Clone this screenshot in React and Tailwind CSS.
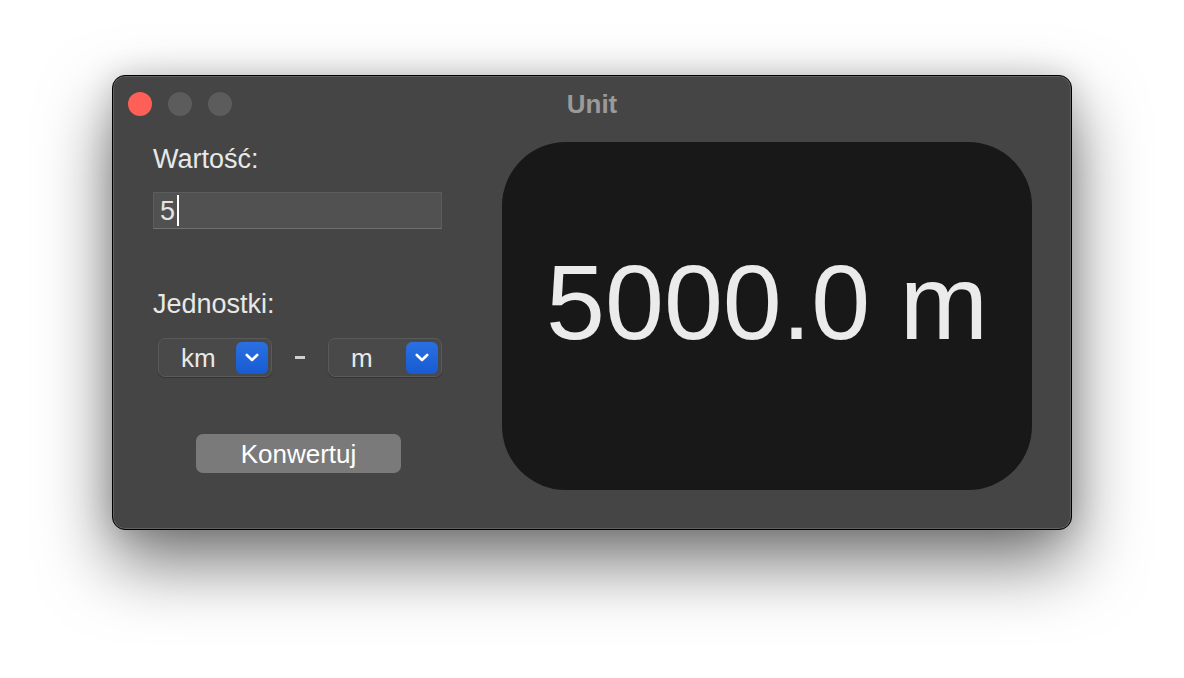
import React from "react";

const ChevronDown = () => (
  <svg width="14" height="9" viewBox="0 0 14 9" fill="none">
    <path d="M1.8 2l5.2 5 5.2-5" stroke="white" strokeWidth="2.6" strokeLinecap="round" strokeLinejoin="round" />
  </svg>
);

const UnitSelect = ({ value }) => (
  <div className="flex items-center h-[39px] w-[114px] rounded-[7px] border border-[#5a5a5a] bg-[#494949] shadow-[0_1px_1px_rgba(0,0,0,0.25)]">
    <span className="flex-1 pl-[22px] text-[26px] leading-[30px] text-[#e8e8e8]">{value}</span>
    <div className="mr-[3px] flex h-[32px] w-[32px] items-center justify-center rounded-[6px] bg-gradient-to-b from-[#2a70e2] to-[#165bd2]">
      <ChevronDown />
    </div>
  </div>
);

export default function App() {
  return (
    <div className="min-h-[678px] w-full bg-white pl-[112px] pt-[75px] font-['Liberation_Sans',Arial,sans-serif]">
      {/* window */}
      <div className="flex h-[455px] w-[960px] flex-col rounded-[13px] border border-black bg-[#454545] shadow-[inset_0_0_0_1px_rgba(255,255,255,0.16),0_32px_70px_rgba(0,0,0,0.55),0_0_30px_rgba(0,0,0,0.15)]">
        {/* title bar */}
        <div className="grid h-[55px] grid-cols-[1fr_auto_1fr] items-center">
          <div className="flex items-center gap-[16px] pl-[15px]">
            <div className="h-[24px] w-[24px] rounded-full bg-[#fe5f57]" />
            <div className="h-[24px] w-[24px] rounded-full bg-[#5c5c5c]" />
            <div className="h-[24px] w-[24px] rounded-full bg-[#5c5c5c]" />
          </div>
          <div className="text-[26px] font-bold leading-[30px] text-[#9a9a9a]">Unit</div>
          <div />
        </div>

        {/* body */}
        <div className="flex pl-[40px]">
          <div className="flex w-[289px] flex-col">
            <div className="mt-[13px] text-[27px] leading-[30px] text-[#e8e8e8]">Wartość:</div>
            <div className="mt-[18px] flex h-[37px] items-center border border-[#5c5c5c] border-b-[#707070] bg-[#515151] pl-[6px]">
              <span className="text-[27px] leading-[30px] text-[#e4e4e4]">5</span>
              <span className="ml-[2px] h-[31px] w-[2px] bg-white" />
            </div>

            <div className="mt-[60px] text-[27px] leading-[30px] text-[#e8e8e8]">Jednostki:</div>
            <div className="mt-[19px] flex items-center pl-[5px]">
              <UnitSelect value="km" />
              <div className="flex w-[56px] justify-center">
                <span className="h-[3px] w-[10px] bg-[#d0d0d0]" />
              </div>
              <UnitSelect value="m" />
            </div>

            <div className="mt-[57px] flex justify-center pl-[2px]">
              <button className="h-[39px] w-[205px] rounded-[7px] bg-[#7a7a7a] text-[26px] leading-[30px] text-white">
                Konwertuj
              </button>
            </div>
          </div>

          <div className="ml-[60px] mt-[11px] flex h-[348px] w-[530px] items-center justify-center rounded-[64px] bg-[#181818] pb-[28px]">
            <span className="text-[106px] leading-none text-[#ebebeb]">5000.0 m</span>
          </div>
        </div>
      </div>
    </div>
  );
}
